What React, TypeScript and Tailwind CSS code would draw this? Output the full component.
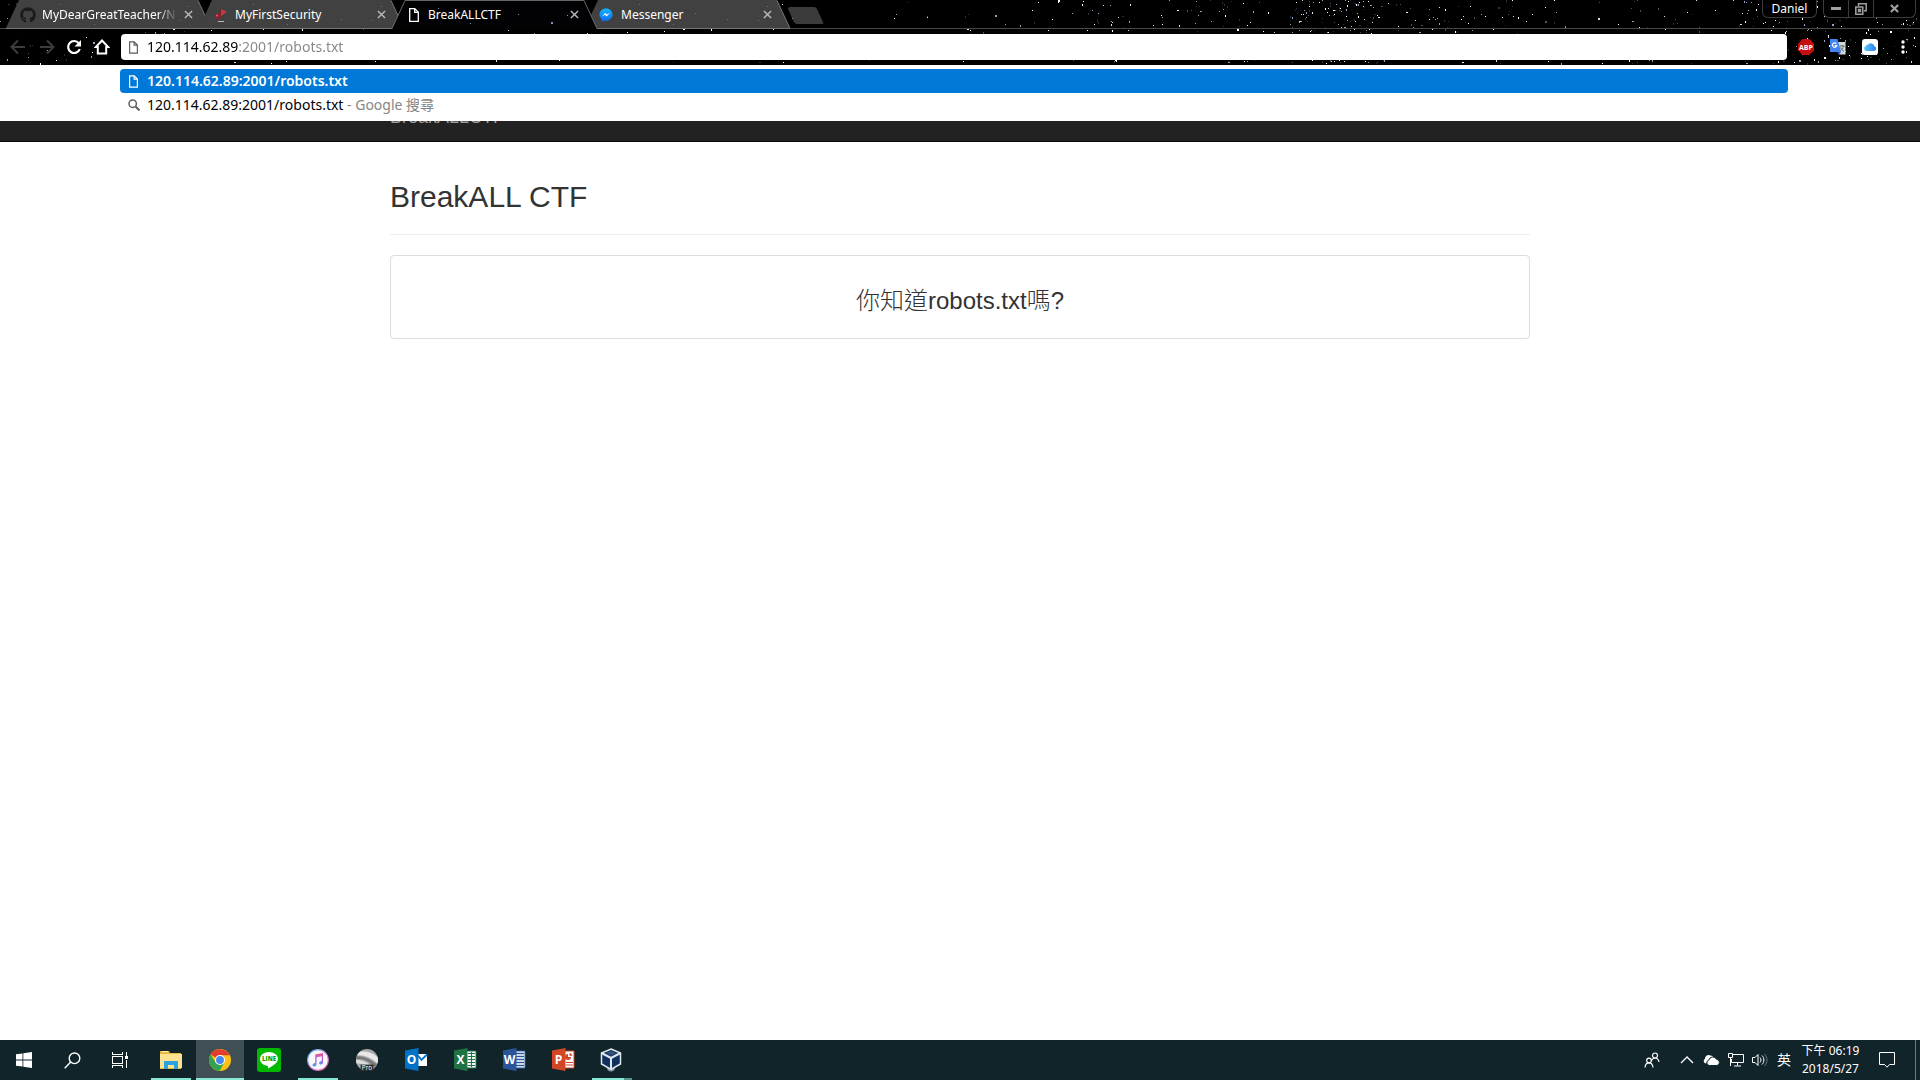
import React from 'react';
import { FaGithub } from 'react-icons/fa';

const ui = "font-['Noto_Sans','Noto_Sans_CJK_TC',sans-serif]";

/* ---------- starfield ---------- */

const zones = [
  { x: 0, w: 400, n: 110 },
  { x: 400, w: 440, n: 110 },
  { x: 840, w: 240, n: 50 },
  { x: 1080, w: 200, n: 130 },
  { x: 1290, w: 90, n: 190 },
  { x: 1380, w: 130, n: 90 },
  { x: 1500, w: 240, n: 95 },
  { x: 1740, w: 180, n: 170 },
];
const starColors = ['#ffffff', '#8fa6c8', '#ffffff', '#c9e4f5', '#4d5068', '#26344a', '#9a9cc0', '#2b2f36'];

function makeStars() {
  let seed = 71;
  const rnd = () => {
    seed = (seed * 16807) % 2147483647;
    return seed / 2147483647;
  };
  return zones.flatMap((z) =>
    Array.from({ length: z.n }, () => ({
      x: Math.floor(z.x + rnd() * z.w),
      y: Math.floor(rnd() * 64),
      h: rnd() > 0.75 ? 2 : 1,
      w: rnd() > 0.88 ? 2 : 1,
      c: starColors[Math.floor(rnd() * starColors.length)],
    })),
  );
}
const stars = makeStars();

function Starfield() {
  return (
    <svg className="absolute inset-0 h-full w-full" aria-hidden="true" shapeRendering="crispEdges">
      {stars.map((s, i) => (
        <rect key={i} x={s.x} y={s.y} width={s.w} height={s.h} fill={s.c} />
      ))}
    </svg>
  );
}

/* ---------- small icons ---------- */

function PageIcon({ className }: { className: string }) {
  return (
    <svg viewBox="0 0 10 14" className={className} fill="none" stroke="currentColor" strokeWidth="1.3">
      <path d="M.7.7h5l3.600 3.600v9H.7z" />
      <path d="M5.700.7v3.600h3.600" />
    </svg>
  );
}

function Cross({ className }: { className: string }) {
  return (
    <svg viewBox="0 0 10 10" className={className} fill="none" stroke="currentColor" strokeWidth="1.600">
      <path d="M1 1l8 8M9 1l-8 8" />
    </svg>
  );
}

function SecurityIcon() {
  return (
    <svg viewBox="0 0 16 16" className="size-4">
      <path d="M8 2l6 3-6 4z" fill="#c33a45" />
      <path d="M7 2h1v9H7z" fill="#5d2529" />
      <circle cx="5" cy="9" r="3" fill="#8f1f2b" />
      <circle cx="4" cy="8.500" r="1" fill="#e0606a" />
      <path d="M5 14h6v1H5z" fill="#b9b9b9" />
    </svg>
  );
}

function MessengerIcon() {
  return (
    <svg viewBox="1 1 14 14" className="size-3.5">
      <defs>
        <linearGradient id="msgr" x1="0" y1="0" x2="0" y2="1">
          <stop offset="0" stopColor="#12b4ff" />
          <stop offset="1" stopColor="#0a6cf5" />
        </linearGradient>
      </defs>
      <path d="M8 1.500c-3.800 0-6.500 2.600-6.500 6.100 0 2 .9 3.600 2.300 4.700v2.500l2.300-1.300c.6.200 1.200.2 1.900.2 3.800 0 6.500-2.700 6.500-6.100S11.800 1.500 8 1.500z" fill="url(#msgr)" />
      <path d="M3.900 9.400l3.400-3.600 1.700 1.700 3.100-1.700-3.400 3.600-1.700-1.700z" fill="#fff" />
    </svg>
  );
}

/* ---------- tabs ---------- */

type TabProps = { title: string; icon: React.ReactNode; active?: boolean; fade?: boolean };

function Tab({ title, icon, active, fade }: TabProps) {
  return (
    <div className={`relative -ml-3 flex h-[29px] w-[205px] shrink-0 items-center pl-3.5 pr-[18px] ${active ? 'z-10' : ''}`}>
      <svg viewBox="0 0 205 29" className="absolute inset-0 h-full w-full" aria-hidden="true">
        {active ? (
          <>
            <path d="M0 29L13 0h179l13 29z" fill="#020204" />
            <path d="M0 28.500L13 .5h179l13 28" fill="none" stroke="#686868" />
            <path d="M46 8h1v1h-1zM126 14h1v1h-1zM159 22h2v2h-2zM78 23h1v1h-1zM175 15h1v1h-1z" fill="#7f92b8" />
          </>
        ) : (
          <>
            <path d="M0 28L13 0h179l13 28z" fill="#414141" />
            <path d="M0 28.500h205L192 .5" fill="none" stroke="#747474" />
            <path d="M54 4h1v1h-1zM110 13h1v1h-1zM142 19h1v1h-1zM173 20h1v1h-1zM88 24h1v1h-1zM182 6h1v1h-1z" fill="#68728a" />
          </>
        )}
      </svg>
      <span className="relative flex w-[22px] shrink-0 items-center">{icon}</span>
      <span className={`relative min-w-0 flex-1 overflow-hidden whitespace-nowrap text-[12px] leading-4 text-white ${fade ? 'mask-r-from-85%' : ''}`}>
        {title}
      </span>
      <button aria-label={`Close ${title}`} className="relative ml-1.5 text-[#b9b9b9]">
        <Cross className="size-[9px]" />
      </button>
    </div>
  );
}

function WindowControls() {
  return (
    <div className="relative ml-auto flex items-start pr-1">
      <button className="mr-1.5 h-[18px] w-[55px] rounded-b-md border border-t-0 border-[#3c3c3c] bg-black text-[12px] leading-[18px] text-white">
        Daniel
      </button>
      <div className="flex h-[18px] w-[93px] rounded-b-md border border-t-0 border-[#3c3c3c] bg-black text-[#a0a0a0]">
        <button aria-label="Minimize" className="flex w-[25px] items-center justify-center border-r border-[#3c3c3c]">
          <svg viewBox="0 0 10 3" className="h-[3px] w-2.5"><path d="M0 0h10v3H0z" fill="currentColor" /></svg>
        </button>
        <button aria-label="Restore" className="flex w-[25px] items-center justify-center border-r border-[#3c3c3c]">
          <svg viewBox="0 0 12 12" className="size-3" fill="none" stroke="currentColor" strokeWidth="1.500">
            <path d="M.8 4h7v7.200h-7zM3.500 6.500h2v2h-2zM3.500 3V.8h7.700v7H9" />
          </svg>
        </button>
        <button aria-label="Close window" className="flex flex-1 items-center justify-center">
          <svg viewBox="0 0 10 10" className="size-[9px]" stroke="currentColor" strokeWidth="2.400"><path d="M1 1l8 8M9 1l-8 8" /></svg>
        </button>
      </div>
    </div>
  );
}

function Toolbar() {
  return (
    <div className="relative flex h-9 items-start pt-[5px]">
      <div className="flex h-[26px] w-[121px] shrink-0 items-center text-white">
        <button aria-label="Back" className="ml-2.5 w-[29px] text-[#3c3c3c]">
          <svg viewBox="0 0 16 16" className="size-4" fill="none" stroke="currentColor" strokeWidth="2"><path d="M15 8H2M8 1.500L1.500 8 8 14.500" /></svg>
        </button>
        <button aria-label="Forward" className="w-[27px] text-[#3c3c3c]">
          <svg viewBox="0 0 16 16" className="size-4" fill="none" stroke="currentColor" strokeWidth="2"><path d="M1 8h13M8 1.500L14.500 8 8 14.500" /></svg>
        </button>
        <button aria-label="Reload" className="w-7">
          <svg viewBox="0 0 16 16" className="size-4" fill="none" stroke="currentColor" strokeWidth="2.200">
            <path d="M12.800 4.200A6 6 0 1 0 13.800 10" />
            <path d="M15 1v6.500H8.500z" fill="currentColor" stroke="none" />
          </svg>
        </button>
        <button aria-label="Home">
          <svg viewBox="0 0 16 16" className="size-4" fill="none" stroke="currentColor" strokeWidth="2"><path d="M8 1.500L1.800 8h2v6.500h8.400V8h2z" /></svg>
        </button>
      </div>
      <div className="flex h-[26px] min-w-0 flex-1 items-center rounded-sm bg-white pl-2">
        <PageIcon className="mr-[9px] h-[13px] w-[9px] text-[#5a5a5a]" />
        <input
          aria-label="Address"
          defaultValue="120.114.62.89:2001/robots.txt"
          className="h-6 min-w-0 flex-1 self-start bg-linear-to-r from-black from-[91px] to-[#868686] to-[91px] bg-clip-text text-[14px] text-transparent caret-black outline-none"
        />
      </div>
      <div className="flex h-[26px] w-[133px] shrink-0 items-center pl-[11px]">
        <button aria-label="Adblock Plus" className="mr-4">
          <svg viewBox="0 0 16 16" className="size-4">
            <path d="M4.700 0h6.600L16 4.700v6.600L11.300 16H4.700L0 11.300V4.700z" fill="#c70d0e" />
            <text x="8" y="10.500" textAnchor="middle" fontSize="7" fontWeight="700" fill="#fff" fontFamily="Open Sans, sans-serif">ABP</text>
          </svg>
        </button>
        <button aria-label="Translate" className="mr-4">
          <svg viewBox="0 0 16 16" className="size-4">
            <path d="M6 3h9.500v12.500H9z" fill="#d5d8d8" />
            <path d="M9.500 7h5M12 6v1M13.500 7c-.5 2.500-2 4-3.500 5M10.500 8.500c.8 1.800 2 3 3.500 3.700" stroke="#5d6f75" fill="none" />
            <path d="M0 0h7.500L11 13H0z" fill="#4283f0" />
            <path d="M11 13H7.500L9 16z" fill="#2a56c6" />
            <path d="M6.300 4.600a2.200 2.200 0 1 0 .5 2H4.700" stroke="#fff" fill="none" strokeWidth="1.200" />
          </svg>
        </button>
        <button aria-label="iCloud" className="mr-[23px]">
          <svg viewBox="0 0 16 16" className="size-4">
            <defs>
              <linearGradient id="cloud"><stop offset="0" stopColor="#5ac8fa" /><stop offset="1" stopColor="#2b7df0" /></linearGradient>
            </defs>
            <rect width="16" height="16" rx="3" fill="#fff" />
            <path d="M4.300 12a2.500 2.500 0 0 1-.4-4.900 2 2 0 0 1 2.300-1.600A3.700 3.700 0 0 1 12.500 7.300 2.400 2.400 0 0 1 12 12z" fill="url(#cloud)" />
          </svg>
        </button>
        <button aria-label="Menu">
          <svg viewBox="0 0 4 16" className="h-4 w-1" fill="#fff"><circle cx="2" cy="3" r="1.700" /><circle cx="2" cy="8" r="1.700" /><circle cx="2" cy="13" r="1.700" /></svg>
        </button>
      </div>
    </div>
  );
}

function Suggestions() {
  return (
    <ul role="listbox" aria-label="Suggestions" className={`absolute inset-x-0 top-0 z-20 bg-white pb-1 pl-[120px] pr-[132px] pt-1 text-[14px] leading-[23px] text-black ${ui}`}>
      <li role="option" aria-selected="true" className="flex h-6 items-start rounded-sm bg-[#0078d7] pl-[9px] font-semibold text-white">
        <PageIcon className="mr-[9px] mt-1.5 h-[13px] w-[9px]" />
        120.114.62.89:2001/robots.txt
      </li>
      <li role="option" aria-selected="false" className="flex h-6 items-start whitespace-pre pl-2">
        <svg viewBox="0 0 12 12" className="mr-[7px] mt-1.5 size-3" fill="none" stroke="#5f5f5f" strokeWidth="1.500">
          <circle cx="4.700" cy="4.700" r="3.700" />
          <path d="M7.500 7.500l4 4" strokeWidth="2" />
        </svg>
        120.114.62.89:2001/robots.txt
        <span className="text-[#868686]"> - Google 搜尋</span>
      </li>
    </ul>
  );
}

/* ---------- taskbar ---------- */

const appIcons: Record<string, React.ReactNode> = {
  Explorer: (
    <svg viewBox="0 0 22 20" className="h-5 w-[22px]">
      <path d="M0 1h9l1 2h11v16H0z" fill="#e7b93f" />
      <path d="M2 1h6v1H2z" fill="#fff3c4" />
      <path d="M0 4h22v14H0z" fill="#fde391" />
      <path d="M4 11h14v8h-4v-4H8v4H4z" fill="#2ba3e0" />
    </svg>
  ),
  Chrome: (
    <svg viewBox="0 0 24 24" className="size-[22px]">
      <circle cx="12" cy="12" r="12" fill="#fbc116" />
      <path d="M12 12L1.600 6A12 12 0 0 1 22.400 6.500L12 6.500z" fill="#e33b2e" />
      <path d="M1.600 6A12 12 0 0 0 11.500 24l5.200-9.200L7.300 14.800z" fill="#32a350" />
      <path d="M12 6.500h10.400" stroke="#c22d22" strokeWidth=".5" />
      <circle cx="12" cy="12" r="5.500" fill="#fff" />
      <circle cx="12" cy="12" r="4.300" fill="#4587f3" />
    </svg>
  ),
  LINE: (
    <svg viewBox="0 0 24 24" className="size-6">
      <rect width="24" height="24" rx="3" fill="#00b900" />
      <path d="M12 4c-5 0-9 3.100-9 7 0 3.500 3.200 6.400 7.500 6.900.8.200.8.700.6 2.600 3.500-1.900 9.900-5.500 9.900-9.500 0-3.900-4-7-9-7z" fill="#fff" />
      <text x="12" y="13" textAnchor="middle" fontSize="6" fontWeight="800" fill="#00a800" fontFamily="Open Sans, sans-serif">LINE</text>
    </svg>
  ),
  iTunes: (
    <svg viewBox="0 0 24 24" className="size-[22px]">
      <defs>
        <linearGradient id="tunes" x1="0" y1="0" x2="0" y2="1"><stop offset="0" stopColor="#f34f8c" /><stop offset=".5" stopColor="#b85be0" /><stop offset="1" stopColor="#3fa6f0" /></linearGradient>
        <linearGradient id="ring" x1="0" y1="0" x2="1" y2="1"><stop offset="0" stopColor="#4cc3f0" /><stop offset=".5" stopColor="#c78ae8" /><stop offset="1" stopColor="#f04f7c" /></linearGradient>
      </defs>
      <circle cx="12" cy="12" r="11.300" fill="#f7f7fb" stroke="url(#ring)" strokeWidth="1.200" />
      <path d="M9 6l8.500-1.700v10.500c0 1.300-1 2.200-2.300 2.200s-2-.8-2-1.700c0-1.200 1-1.900 2.900-2.200V8L10.400 9v8c0 1.300-1 2.200-2.300 2.200s-2-.8-2-1.700c0-1.200 1-1.900 2.900-2.200z" fill="url(#tunes)" />
    </svg>
  ),
  'Earth Pro': (
    <svg viewBox="0 0 24 24" className="size-[22px]">
      <defs><clipPath id="globe"><circle cx="12" cy="12" r="12" /></clipPath></defs>
      <g clipPath="url(#globe)">
        <path d="M0 0h24v24H0z" fill="#a8a8a8" />
        <path d="M0 7C8 6 16 9 24 16V9C18 4 12 2 4 3z" fill="#e8e8e8" />
        <path d="M0 11c8-1 14 2 20 9l4-2C16 11 8 7 0 8z" fill="#777" />
        <path d="M0 16c5-1 9 1 13 4l4-1C12 14 6 12 0 12z" fill="#dcdcdc" />
      </g>
      <path d="M5 17h14v7H5z" fill="#2d2d2d" />
      <text x="12" y="23" textAnchor="middle" fontSize="7" fill="#fff" fontFamily="Open Sans, sans-serif">Pro</text>
    </svg>
  ),
  Outlook: (
    <Office color="#0072c6" letter="O">
      <path d="M13 6h9v12h-9z" fill="#fff" />
      <path d="M13 7.500l3.500 4.500L22 6.500" fill="none" stroke="#0072c6" strokeWidth="1.800" />
    </Office>
  ),
  Excel: (
    <Office color="#207245" letter="X" framed>
      <path d="M13 3h9v17h-9z" fill="#fff" />
      <path d="M14 5.500h7M14 8.500h7M14 11.500h7M14 14.500h7M14 17.500h7M17.500 4v15" stroke="#207245" strokeWidth="1.200" />
    </Office>
  ),
  Word: (
    <Office color="#2a5699" letter="W" framed>
      <path d="M13 3h9v17h-9z" fill="#fff" />
      <path d="M13 5.500h8M13 8.500h8M13 11.500h8M13 14.500h8M13 17.500h8" stroke="#2a5699" strokeWidth="1.300" />
    </Office>
  ),
  PowerPoint: (
    <Office color="#d24625" letter="P" framed>
      <path d="M13 3h9v17h-9z" fill="#fff" />
      <path d="M16 6a3 3 0 1 0 3 3h-3z" fill="#d24625" />
      <path d="M17.500 5v2.800h2.800A3 3 0 0 0 17.500 5zM14 14h7v1h-7zM14 16.500h7v1h-7z" fill="#d24625" />
    </Office>
  ),
  VirtualBox: (
    <svg viewBox="0 0 22 24" className="mr-[3px] h-6 w-[22px]">
      <circle cx="11" cy="19.500" r="4" fill="#7f93a8" />
      <path d="M11 1l9.500 4v11L11 21.500 1.500 16V5z" fill="#12305e" stroke="#dfe7ee" strokeWidth="1.500" />
      <path d="M1.500 5L11 10l9.500-5M11 10v11" fill="none" stroke="#dfe7ee" strokeWidth="2" />
      <path d="M6 5l5-2.300L16 5l-5 2.500z" fill="#34507c" />
    </svg>
  ),
};

type OfficeProps = { color: string; letter: string; framed?: boolean; children: React.ReactNode };

function Office({ color, letter, framed, children }: OfficeProps) {
  return (
    <svg viewBox="0 0 23 23" className="size-[23px]">
      {children}
      {framed && <path d="M13 3h9v17h-9" fill="none" stroke={color} />}
      <path d="M0 2.500L13.500 0v23L0 20.500z" fill={color} />
      <text x="6.500" y="16" textAnchor="middle" fontSize="12" fontWeight="700" fill="#fff" fontFamily="Open Sans, sans-serif">{letter}</text>
    </svg>
  );
}

const apps = [
  { name: 'Explorer', state: 'open' },
  { name: 'Chrome', state: 'active' },
  { name: 'LINE', state: '' },
  { name: 'iTunes', state: 'open' },
  { name: 'Earth Pro', state: '' },
  { name: 'Outlook', state: '' },
  { name: 'Excel', state: '' },
  { name: 'Word', state: '' },
  { name: 'PowerPoint', state: '' },
  { name: 'VirtualBox', state: 'multi' },
];

function Taskbar() {
  return (
    <footer className={`flex h-10 shrink-0 items-stretch bg-[#11242a] text-white ${ui}`}>
      <button aria-label="Start" className="flex w-12 items-center justify-center">
        <svg viewBox="0 0 16 16" className="size-4" fill="#fff"><path d="M0 2.300l6.500-.9v6.200H0zM7.300 1.300L16 0v7.600H7.300zM0 8.400h6.500v6.200L0 13.700zM7.300 8.400H16V16l-8.700-1.200z" /></svg>
      </button>
      <button aria-label="Search" className="flex w-12 items-center justify-center">
        <svg viewBox="0 0 17 17" className="size-[17px]" fill="none" stroke="#fff" strokeWidth="1.400"><circle cx="10.500" cy="6.300" r="5.300" /><path d="M6.700 10L.7 16.200" /></svg>
      </button>
      <button aria-label="Task View" className="mr-[3px] flex w-12 items-center justify-center">
        <svg viewBox="0 0 16 16" className="size-4" fill="none" stroke="#fff" shapeRendering="crispEdges">
          <path d="M.5 0v2.500h10V0M.5 4.500h10v7H.5zM.5 16v-2.500h10V16M14.500 0v4M14.500 8v8" />
          <path d="M13 4h3v3h-3z" fill="#fff" stroke="none" />
        </svg>
      </button>
      <div className="flex gap-px">
        {apps.map(({ name, state }) => (
          <button key={name} aria-label={name} className={`flex w-12 flex-col items-center ${state === 'active' ? 'bg-[#3f4f54]' : ''}`}>
            <span className="flex h-[38px] items-center justify-center pt-px">{appIcons[name]}</span>
            {state === 'active' && <span className="h-0.5 w-full bg-[#86e8d4]" />}
            {state === 'open' && <span className="h-0.5 w-10 bg-[#86e8d4]" />}
            {state === 'multi' && (
              <span className="flex h-0.5 w-10">
                <span className="flex-1 bg-[#86e8d4]" />
                <span className="w-2 bg-[#549688]" />
              </span>
            )}
          </button>
        ))}
      </div>
      <div className="ml-auto flex items-center">
        <button aria-label="People" className="mr-5">
          <svg viewBox="0 0 16 16" className="size-4" fill="none" stroke="#fff" strokeWidth="1.200">
            <circle cx="11" cy="3.500" r="2.500" /><path d="M7.500 8.500c.8-1.700 2-2.500 3.500-2.500s3.500 1 4 4" />
            <circle cx="5" cy="8.500" r="2.300" /><path d="M1 15.500c.3-3 1.800-4.700 4-4.700s3.700 1.700 4 4.700" />
          </svg>
        </button>
        <button aria-label="Show hidden icons" className="mr-[9px]">
          <svg viewBox="0 0 14 8" className="h-2 w-3.5" fill="none" stroke="#fff" strokeWidth="1.400"><path d="M1 7l6-6 6 6" /></svg>
        </button>
        <button aria-label="OneDrive" className="mr-2">
          <svg viewBox="0 0 17 12" className="h-3 w-[17px]">
            <path d="M3 9.500A2.500 2.500 0 0 1 2 4.800 3.600 3.600 0 0 1 7.500 1.500a3.500 3.500 0 0 1 3 1.500" fill="#fff" />
            <path d="M6.500 11.500a2.800 2.800 0 0 1-.6-5.500 4 4 0 0 1 7.500-.8 3.200 3.200 0 0 1 .6 6.300z" fill="#fff" stroke="#11242a" />
          </svg>
        </button>
        <button aria-label="Network" className="mr-2">
          <svg viewBox="0 0 16 14" className="h-3.5 w-4" fill="none" stroke="#fff">
            <path d="M5 1.500h10.500v8H3.500V6M9.500 9.500v3M6 13h7M.5.500h4v4h-4zM2.500 4.500v8.500" />
          </svg>
        </button>
        <button aria-label="Volume" className="mr-2">
          <svg viewBox="0 0 16 14" className="h-3.5 w-4" fill="none" stroke="#fff">
            <path d="M.5 4.500h2.500l3-3v11l-3-3H.5zM8 4.500c1.300 1.500 1.300 3.500 0 5M10 2.500c2.500 2.500 2.500 6.500 0 9" />
            <path d="M12.500 1c3.300 3.500 3.300 8.500 0 12" stroke="#6b7a7e" />
          </svg>
        </button>
        <button aria-label="Input language" className="mr-2 w-4 text-[14px] leading-5">英</button>
        <button className="mr-[18px] w-[61px] whitespace-nowrap text-center text-[12px] leading-[18px]">
          下午 06:19
          <br />
          2018/5/27
        </button>
        <button aria-label="Notifications" className="mr-5">
          <svg viewBox="0 0 16 16" className="size-4" fill="none" stroke="#fff"><path d="M.5.500h15v12h-5L8 15.200 5.500 12.500h-5z" /></svg>
        </button>
        <button aria-label="Show desktop" className="h-10 w-[5px] border-l border-[#6d797d]" />
      </div>
    </footer>
  );
}

/* ---------- page ---------- */

export default function App() {
  return (
    <div className="flex min-h-screen flex-col bg-white">
      <header className={`relative overflow-hidden bg-black ${ui}`}>
        <Starfield />
        <div className="relative flex h-[29px] items-start border-b border-[#484848]">
          <div className="flex h-[29px] pl-[18px]">
            <Tab title="MyDearGreatTeacher/N" fade icon={<FaGithub className="size-4 text-[#1b1b1b]" />} />
            <Tab title="MyFirstSecurity" icon={<SecurityIcon />} />
            <Tab title="BreakALLCTF" active icon={<PageIcon className="ml-[3px] h-3.5 w-2.5 text-white" />} />
            <Tab title="Messenger" icon={<MessengerIcon />} />
          </div>
          <button aria-label="New tab" className="relative -ml-0.5 mt-[7px]">
            <svg viewBox="0 0 36 18" className="h-[18px] w-9"><path d="M2 0h24q2 0 3 2l6 13q1 2-1 2H9q-2 0-3-2L0 2q0-2 2-2z" fill="#3b3b3b" /></svg>
          </button>
          <WindowControls />
        </div>
        <Toolbar />
      </header>

      <div className="relative flex-1 pt-[26px] font-['Liberation_Sans','Noto_Sans_CJK_TC',sans-serif] text-[#333]">
        <Suggestions />
        <nav className="border-b border-[#080808] bg-[#222]">
          <div className="mx-auto h-[50px] max-w-[1140px] py-4">
            <a href="#" className="block text-[18px] leading-5 text-[#9d9d9d]">BreakALLCTF</a>
          </div>
        </nav>
        <main className="mx-auto max-w-[1140px]">
          <h1 className="border-b border-[#eee] pb-[21px] pt-[38px] text-[30px] leading-[33px]">BreakALL CTF</h1>
          <section className="mt-5 rounded border border-[#ddd] pb-6 pt-8 text-center">
            <h2 className="text-[24px] leading-[26px]">
              <span className="font-light">你知道</span>robots.txt<span className="font-light">嗎</span>?
            </h2>
          </section>
        </main>
      </div>

      <Taskbar />
    </div>
  );
}
